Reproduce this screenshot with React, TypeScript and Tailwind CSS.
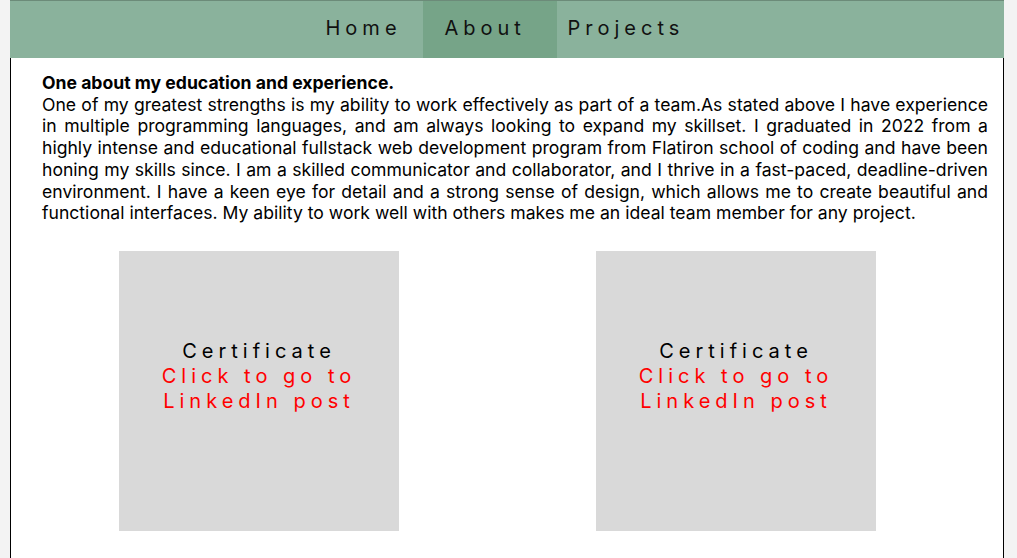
import React from "react";

export default function App() {
  const font = { fontFamily: "Inter, 'Noto Sans', sans-serif" };
  return (
    <div className="min-h-[558px] w-full bg-[#f3f3f3] pl-[10px] pr-[13px]" style={font}>
      <div className="min-h-[558px] bg-white flex flex-col">
        <header className="h-[58px] bg-[#8ab29c] border-t border-[#6c8b79] flex justify-center">
          <nav className="flex h-full pr-[8px] text-[20px] tracking-[5px] text-[#111]">
            <a className="flex items-center h-full pb-[4px] pl-[22px] w-[119px]">Home</a>
            <a className="flex items-center h-full pb-[4px] pl-[22px] w-[134px] bg-[#76a488]">About</a>
            <a className="flex items-center h-full pb-[4px] pl-[11px] w-[146px]">Projects</a>
          </nav>
        </header>
        <main className="flex-1 border-l border-r border-black pl-[31px] pr-[15px] pt-[14px]">
          <p className="text-[17.6px] leading-[21.7px] text-black text-justify">
            <span className="font-bold block">One about my education and experience.</span>
            One of my greatest strengths is my ability to work effectively as part of a team.As stated above I have experience in multiple programming languages, and am always looking to expand my skillset. I graduated in 2022 from a highly intense and educational fullstack web development program from Flatiron school of coding and have been honing my skills since. I am a skilled communicator and collaborator, and I thrive in a fast-paced, deadline-driven environment. I have a keen eye for detail and a strong sense of design, which allows me to create beautiful and functional interfaces. My ability to work well with others makes me an ideal team member for any project.
          </p>
          <div className="flex mt-[27px] pl-[77px] gap-[197px]">
            {[0, 1].map((i) => (
              <div
                key={i}
                className="w-[280px] h-[280px] bg-[#d9d9d9] flex flex-col items-center justify-center pb-[29px] text-[20px] leading-[25px] tracking-[5px] text-center"
              >
                <span className="text-black">Certificate</span>
                <span className="text-[#ff0000]">Click to go to<br />LinkedIn post</span>
              </div>
            ))}
          </div>
        </main>
      </div>
    </div>
  );
}
